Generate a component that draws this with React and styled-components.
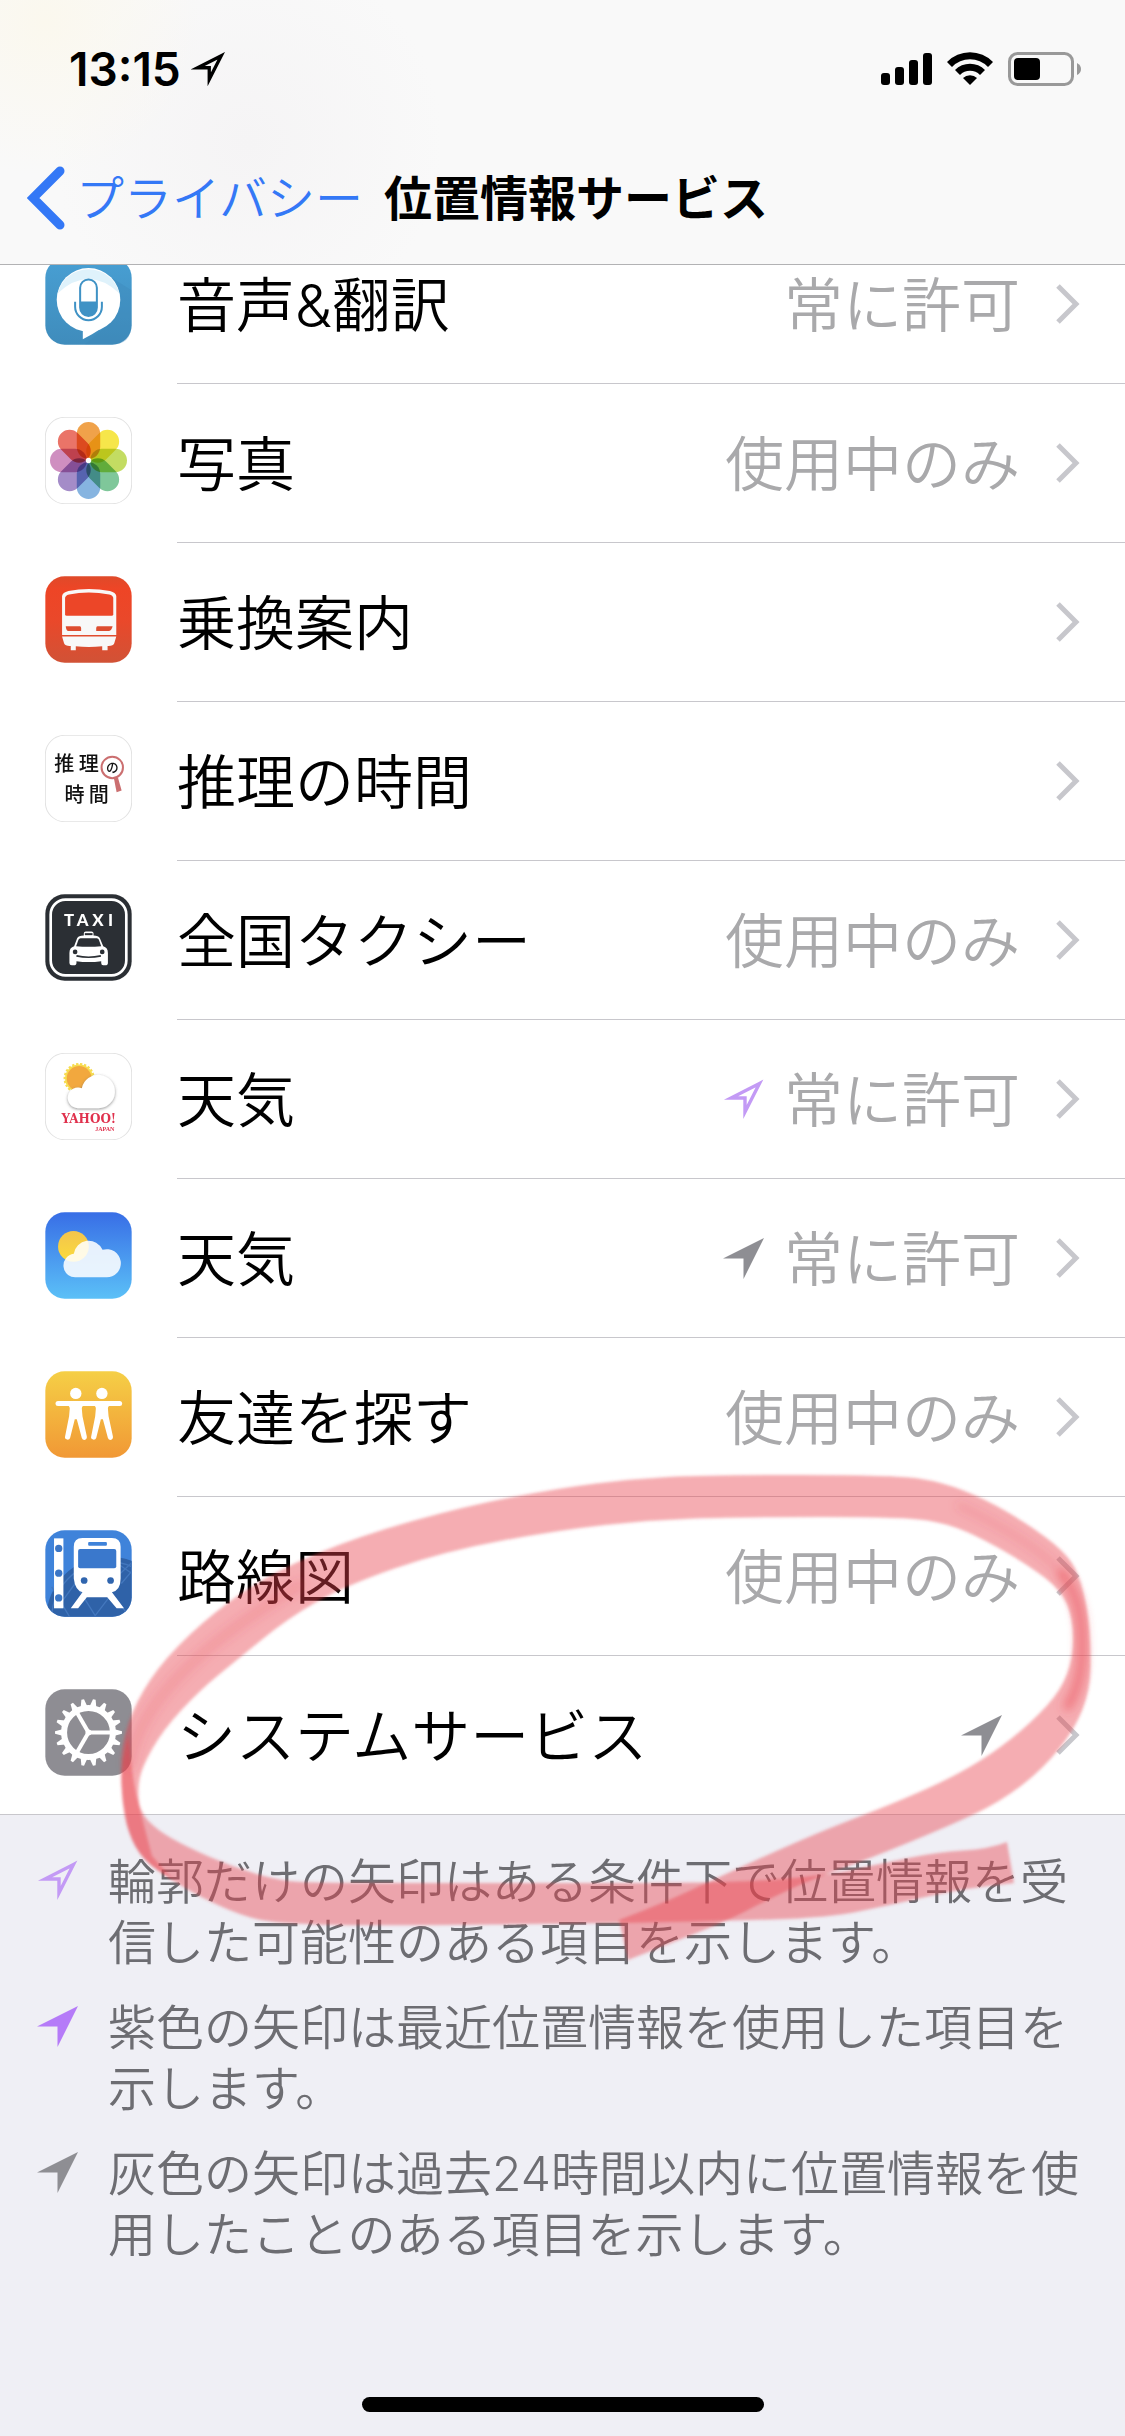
import styled, { createGlobalStyle } from "styled-components";

const GlobalStyle = createGlobalStyle`
    *{
        box-sizing: border-box;
    }
    body{
        margin: 0;
        background: #efeff5;
        font-family: Inter, "Noto Sans CJK JP", sans-serif;
    }
    ul{
        list-style: none;
        margin: 0;
        padding: 0;
    }
    a{
        color: inherit;
        text-decoration: none;
    }
    svg{
        display: block;
        flex-shrink: 0;
    }
`

const Arrow = ({size = 41, color, outline, weight = 3.4}) => (
    <svg width={size} height={size} viewBox="0 0 41 41" aria-hidden="true">
        {outline
            ? <path d="M36.5 4.5 L8 19 H22 V33 Z" fill="none" stroke={color} strokeWidth={weight} strokeMiterlimit="12" />
            : <path d="M41 0 L0 20.5 H20.5 V41 Z" fill={color} />}
    </svg>
)

const Tile = ({children, fill, border}) => (
    <svg width="87" height="87" viewBox="0 0 260 260" aria-hidden="true">
        <rect x="1" y="1" width="258" height="258" rx="58" fill={fill} stroke={border || 'none'} strokeWidth="3" />
        {children}
    </svg>
)

const VoiceIcon = () => (
    <Tile fill="url(#voiceBg)">
        <defs>
            <linearGradient id="voiceBg" x1="0" y1="0" x2="0" y2="1">
                <stop offset="0" stopColor="#489fd3" />
                <stop offset="1" stopColor="#3f8cbc" />
            </linearGradient>
        </defs>
        <path d="M200 60 L258 96 V200 Q258 258 200 258 H120 L210 180 Z" fill="#3b87b8" opacity="0.35" />
        <circle cx="130" cy="125" r="95" fill="#fff" />
        <path d="M113 205 V243 Q140 230 168 211 Z" fill="#fff" />
        <path d="M38 105 A95 95 0 0 1 222 105 Q130 20 38 105 Z" fill="#dff2fb" />
        <rect x="105" y="64" width="50" height="109" rx="25" fill="#fff" stroke="#3f92c5" strokeWidth="6" />
        <path d="M105 130 H155 V148 A25 25 0 0 1 105 148 Z" fill="#3f92c5" />
        <path d="M90 131 V146 A40 40 0 0 0 170 146 V131" fill="none" stroke="#3f92c5" strokeWidth="6" />
    </Tile>
)

const petals = ['#f0a24a', '#f6e64a', '#c3dc62', '#7fc79a', '#86b4e0', '#a48cc8', '#cf8fc0', '#ea7468']

const Petal = styled.rect`
    mix-blend-mode: multiply;
`
const Flower = styled.g`
    isolation: isolate;
`

const PhotosIcon = () => (
    <Tile fill="#fff" border="#e2e2e2">
        <Flower>
            {petals.map((color, i) => (
                <Petal
                    key={color}
                    x="95" y="15" width="70" height="110" rx="35"
                    fill={color}
                    transform={`rotate(${i * 45} 130 130)`}
                />
            ))}
        </Flower>
        <circle cx="130" cy="130" r="8" fill="#fff" />
    </Tile>
)

const TransferIcon = () => (
    <Tile fill="url(#transferBg)">
        <defs>
            <linearGradient id="transferBg" x1="0" y1="0" x2="0" y2="1">
                <stop offset="0" stopColor="#df4a2a" />
                <stop offset="0.15" stopColor="#ee4526" />
                <stop offset="0.5" stopColor="#ea482a" />
                <stop offset="1" stopColor="#d15236" />
            </linearGradient>
        </defs>
        <path d="M51 60 Q52 50 70 45 Q130 33 194 45 Q212 50 213 60 V176 H51 Z" fill="#f8f8f8" />
        <path d="M60 66 Q60 58 72 55 Q130 44 192 55 Q204 58 204 66 V114 Q204 119 199 119 H65 Q60 119 60 114 Z" fill="#ec4628" />
        <path d="M62 150 H104 Q108 150 108 156 V164 H70 Q63 164 62 150 Z M202 150 H157 Q153 150 153 156 V164 H190 Q199 164 202 150 Z" fill="#dd4d30" />
        <path d="M51 181 H213 L207 201 Q204 209 190 209 H187 V222 H171 V210 Q130 214 92 210 V222 H77 V209 H74 Q60 209 57 201 Z" fill="#f8f8f8" />
    </Tile>
)

const MysteryIcon = () => (
    <Tile fill="#fff" border="#e2e2e2">
        <g fontFamily='"Noto Sans CJK JP", sans-serif' fontWeight="500" fill="#111">
            <text x="28" y="108" fontSize="60">推</text>
            <text x="101" y="108" fontSize="60">理</text>
            <text x="58" y="201" fontSize="60">時</text>
            <text x="131" y="201" fontSize="60">間</text>
            <text x="182" y="111" fontSize="38">の</text>
        </g>
        <circle cx="201" cy="97" r="32" fill="none" stroke="#cb6f70" strokeWidth="6" />
        <path d="M206 130 L218 127 L229 166 L214 171 Z" fill="#cb6f70" />
    </Tile>
)

const TaxiIcon = () => (
    <Tile fill="#2b2f34">
        <rect x="17" y="17" width="226" height="226" rx="44" fill="none" stroke="#fff" strokeWidth="8" />
        <text x="57 95 141 188" y="95" fontFamily="Lato, sans-serif" fontWeight="900" fontSize="50" fill="#fff">TAXI</text>
        <path d="M116 124 V117 Q116 112 122 112 H139 Q145 112 145 117 V124 Q160 124 164 132 L174 156 Q188 160 188 176 V206 Q188 213 180 213 H174 Q168 213 168 206 V201 Q130 206 94 201 V206 Q94 213 86 213 H80 Q73 213 73 206 V176 Q73 160 87 156 L96 132 Q100 124 116 124 Z" fill="#fff" />
        <path d="M119 117 H142 V123 H119 Z" fill="#2b2f34" />
        <path d="M106 132 H155 Q159 132 161 137 L168 156 Q130 160 93 156 L100 137 Q102 132 106 132 Z" fill="#2b2f34" />
        <circle cx="90" cy="173" r="7" fill="#2b2f34" />
        <circle cx="171" cy="173" r="7" fill="#2b2f34" />
        <path d="M94 185 Q130 193 167 185" fill="none" stroke="#2b2f34" strokeWidth="5" />
    </Tile>
)

const YahooWeatherIcon = () => (
    <Tile fill="#fff" border="#e2e2e2">
        <defs>
            <filter id="cloudShadow" x="-20%" y="-20%" width="140%" height="150%">
                <feDropShadow dx="0" dy="3" stdDeviation="4" floodColor="#666" floodOpacity="0.7" />
            </filter>
        </defs>
        <circle cx="102" cy="76" r="42" fill="#f7dc50" />
        <circle cx="102" cy="76" r="43" fill="none" stroke="#f7dc50" strokeWidth="7" strokeDasharray="7 5" />
        <circle cx="102" cy="76" r="37" fill="#f2a83e" />
        <path
            d="M98 165 A31 31 0 1 1 110 105 A50 50 0 1 1 160 165 Z"
            fill="#fff"
            filter="url(#cloudShadow)"
        />
        <g fontWeight="700" fill="#e0314d">
            <text x="49" y="208" fontFamily='"DejaVu Serif", serif' fontSize="36">YAHOO!</text>
            <text x="150" y="232" fontFamily='"Liberation Serif", serif' fontSize="18">JAPAN</text>
        </g>
    </Tile>
)

const WeatherIcon = () => (
    <Tile fill="url(#skyBg)">
        <defs>
            <linearGradient id="skyBg" x1="0" y1="0" x2="0" y2="1">
                <stop offset="0" stopColor="#386ee6" />
                <stop offset="1" stopColor="#5bc0f7" />
            </linearGradient>
            <linearGradient id="sunBg" x1="0" y1="0" x2="0" y2="1">
                <stop offset="0" stopColor="#f3c44c" />
                <stop offset="1" stopColor="#fbdc3c" />
            </linearGradient>
        </defs>
        <circle cx="85" cy="103" r="46" fill="url(#sunBg)" />
        <path
            d="M95 195 A35 35 0 0 1 86 125 A45 45 0 0 1 172 113 A42 42 0 1 1 183 195 Z"
            fill="#fff"
            opacity="0.87"
        />
    </Tile>
)

const FriendsIcon = () => (
    <Tile fill="url(#friendsBg)">
        <defs>
            <linearGradient id="friendsBg" x1="0" y1="0" x2="0" y2="1">
                <stop offset="0" stopColor="#f5cf46" />
                <stop offset="1" stopColor="#f19835" />
            </linearGradient>
        </defs>
        <path d="M39 97 H223" stroke="#fff" strokeWidth="15" strokeLinecap="round" />
        {[92, 170].map(x => (
            <g key={x} transform={`translate(${x} 0)`} fill="#fff">
                <circle cx="0" cy="67" r="17" />
                <path d="M-28 100 H28 Q18 104 18 112 L20 135 L33 196 Q34 205 26 206 Q20 206 18 200 L3 144 H-3 L-17 200 Q-19 206 -26 205 Q-34 203 -32 196 L-20 135 L-18 112 Q-18 104 -28 100 Z" />
            </g>
        ))}
    </Tile>
)

const RailMapIcon = () => (
    <Tile fill="#3f83da">
        <defs>
            <clipPath id="railClip"><rect x="1" y="1" width="258" height="258" rx="58" /></clipPath>
        </defs>
        <g clipPath="url(#railClip)">
            <circle cx="190" cy="265" r="186" fill="#2f62a8" />
            <g fill="none" stroke="#4377bd" strokeWidth="4">
                <circle cx="190" cy="265" r="170" />
                <path d="M20 170 L75 262 M50 215 L90 160 L150 256 L200 190 L250 256 M190 82 L260 130 M225 130 L262 95 M228 160 L262 120" />
            </g>
        </g>
        <rect x="27" y="25" width="28" height="209" fill="#fff" />
        {[55, 129, 203].map(y => <circle key={y} cx="41" cy={y} r="11" fill="#3b76c6" />)}
        <path d="M86 50 Q86 24 112 24 H200 Q226 24 226 50 V145 Q226 180 200 186 L236 234 H214 L186 201 H125 L99 234 H77 L112 186 Q90 180 86 145 Z" fill="#fff" />
        <rect x="129" y="36" width="56" height="11" rx="3" fill="#3f83da" />
        <rect x="99" y="57" width="114" height="57" rx="6" fill="#3a78cc" />
        <circle cx="117" cy="151" r="10" fill="#3065ae" />
        <circle cx="196" cy="151" r="10" fill="#3065ae" />
    </Tile>
)

const teeth = Array.from({length: 18}, (_, i) => i * 20)

const GearIcon = () => (
    <Tile fill="#8e8d93">
        <circle cx="130" cy="130" r="73" fill="none" stroke="#fff" strokeWidth="18" />
        {teeth.map(deg => (
            <path key={deg} d="M208 120 L230 126 V134 L208 140 Z" fill="#fff" transform={`rotate(${deg} 130 130)`} />
        ))}
        {[0, 120, 240].map(deg => (
            <path key={deg} d="M130 130 H200" stroke="#fff" strokeWidth="12" transform={`rotate(${deg} 130 130)`} />
        ))}
        <circle cx="130" cy="130" r="9" fill="#fff" />
    </Tile>
)

const Chevron = () => (
    <svg width="24" height="40" viewBox="0 0 24 40" aria-hidden="true">
        <path d="M2 2 L20 20 L2 38" fill="none" stroke="#c7c7cc" strokeWidth="5" />
    </svg>
)

const SignalIcon = () => (
    <svg width="51" height="34" viewBox="0 0 51 34" aria-hidden="true">
        <rect x="0" y="21" width="9" height="12" rx="3" />
        <rect x="14" y="15" width="9" height="18" rx="3" />
        <rect x="28" y="8" width="9" height="25" rx="3" />
        <rect x="42" y="1" width="9" height="32" rx="3" />
    </svg>
)

const WifiIcon = () => (
    <svg width="46" height="34" viewBox="0 0 46 34" aria-hidden="true">
        <path d="M0 10 A32 32 0 0 1 46 10 L41 15 A25 25 0 0 0 5 15 Z" />
        <path d="M8 18 A21 21 0 0 1 38 18 L33 23 A14 14 0 0 0 13 23 Z" />
        <path d="M16 26 A10 10 0 0 1 30 26 L23 33 Z" />
    </svg>
)

const BatteryIcon = () => (
    <svg width="74" height="34" viewBox="0 0 74 34" aria-hidden="true">
        <rect x="1.5" y="1.5" width="63" height="31" rx="8" fill="none" stroke="#999" strokeWidth="3" />
        <rect x="6" y="6" width="26" height="22" rx="4" />
        <path d="M69 11 Q73 13 73 17 Q73 21 69 23 Z" fill="#999" />
    </svg>
)

const apps = [
    {name: '音声&翻訳', icon: VoiceIcon, status: '常に許可'},
    {name: '写真', icon: PhotosIcon, status: '使用中のみ'},
    {name: '乗換案内', icon: TransferIcon},
    {name: '推理の時間', icon: MysteryIcon},
    {name: '全国タクシー', icon: TaxiIcon, status: '使用中のみ'},
    {name: '天気', icon: YahooWeatherIcon, status: '常に許可', arrow: 'outline'},
    {name: '天気', icon: WeatherIcon, status: '常に許可', arrow: 'gray'},
    {name: '友達を探す', icon: FriendsIcon, status: '使用中のみ'},
    {name: '路線図', icon: RailMapIcon, status: '使用中のみ'},
    {name: 'システムサービス', icon: GearIcon, arrow: 'gray'},
]

const arrows = {
    outline: <Arrow color="#c39af5" outline />,
    purple: <Arrow color="#b57bf8" />,
    gray: <Arrow color="#8e8e93" />,
}

const notes = [
    {arrow: 'outline', text: '輪郭だけの矢印はある条件下で位置情報を受信した可能性のある項目を示します。'},
    {arrow: 'purple', text: '紫色の矢印は最近位置情報を使用した項目を示します。'},
    {arrow: 'gray', text: '灰色の矢印は過去24時間以内に位置情報を使用したことのある項目を示します。'},
]

// curve through the midpoints of a point list
const smooth = (pts, start) => {
    let d = `${start} ${pts[0][0]} ${pts[0][1]}`
    for (let i = 1; i < pts.length - 1; i++) {
        const [x, y] = pts[i]
        const [nx, ny] = pts[i + 1]
        d += ` Q${x} ${y} ${(x + nx) / 2} ${(y + ny) / 2}`
    }
    const last = pts[pts.length - 1]
    return d + ` L${last[0]} ${last[1]}`
}

const loopOuter = [
    [628, 1960], [679, 1940], [729, 1920], [765, 1901], [812, 1879], [866, 1860], [949, 1826], [1000, 1802],
    [1043, 1769], [1075, 1729], [1090, 1690], [1091, 1651], [1088, 1611], [1079, 1574], [1064, 1551],
    [1028, 1524], [985, 1499], [942, 1482], [895, 1475], [704, 1475], [632, 1479], [560, 1488], [466, 1506],
    [359, 1536], [273, 1572], [215, 1611], [165, 1658], [136, 1701], [121, 1745], [121, 1793], [128, 1833],
    [143, 1860], [175, 1882],
]
const loopInner = [
    [152, 1856], [143, 1822], [139, 1805], [138, 1787], [142, 1767], [163, 1730], [200, 1690], [237, 1660],
    [287, 1619], [344, 1586], [445, 1551], [560, 1530], [650, 1520], [740, 1517], [906, 1517], [949, 1524],
    [985, 1540], [1028, 1565], [1061, 1590], [1073, 1619], [1073, 1658], [1061, 1690], [1032, 1722],
    [992, 1754], [949, 1779], [892, 1804], [827, 1829], [776, 1851], [719, 1877], [668, 1901], [619, 1920],
]
const tailOuter = [
    [128, 1735], [121, 1765], [122, 1800], [128, 1833], [143, 1860], [167, 1877], [200, 1897], [240, 1915],
    [273, 1923], [360, 1926], [624, 1923], [717, 1921], [827, 1918], [895, 1904], [956, 1890], [1014, 1883],
]
const tailInner = [
    [1007, 1842], [989, 1849], [938, 1852], [884, 1863], [827, 1875], [762, 1881], [680, 1883], [560, 1883],
    [323, 1883], [280, 1881], [233, 1867], [187, 1847], [157, 1830], [140, 1812], [133, 1780], [128, 1735],
]

const RedMark = () => (
    <MarkSvg viewBox="100 1460 1010 520" aria-hidden="true">
        <defs>
            <filter id="edge"><feGaussianBlur stdDeviation="1.5" /></filter>
            <filter id="core"><feGaussianBlur stdDeviation="5" /></filter>
        </defs>
        <g fill="#e8404a" filter="url(#edge)">
            <path d={smooth(loopOuter, 'M') + smooth(loopInner, 'L') + 'Z'} fillOpacity="0.43" />
            <path d={smooth(tailOuter, 'M') + smooth(tailInner, 'L') + 'Z'} fillOpacity="0.43" />
        </g>
        <g fill="none" stroke="#e8404a" strokeLinecap="round" filter="url(#core)">
            <path d="M1062 1574 Q1083 1600 1082 1645 Q1083 1680 1068 1706" strokeWidth="10" strokeOpacity="0.45" />
            <path d="M960 1506 Q1040 1545 1064 1576" strokeWidth="8" strokeOpacity="0.16" />
            <path d="M300 1585 Q140 1680 130 1765" strokeWidth="12" strokeOpacity="0.16" />
        </g>
    </MarkSvg>
)

const App = () => {
    return (
        <Page>
            <GlobalStyle />
            <Header>
                <StatusBar>
                    <Clock>13:15<Arrow size={34} color="#000" weight={4} outline /></Clock>
                    <Indicators>
                        <SignalIcon />
                        <WifiIcon />
                        <BatteryIcon />
                    </Indicators>
                </StatusBar>
                <NavBar>
                    <BackLink href="#privacy">
                        <svg width="38" height="64" viewBox="0 0 38 64" aria-hidden="true">
                            <path d="M33 5 L6 32 L33 59" fill="none" stroke="#3478f6" strokeWidth="9" strokeLinecap="round" strokeLinejoin="miter" />
                        </svg>
                        <span>プライバシー</span>
                    </BackLink>
                    <h1>位置情報サービス</h1>
                </NavBar>
            </Header>
            <AppList>
                {apps.map(({name, icon: Icon, status, arrow}, i) => (
                    <li key={i}>
                        <AppRow href={`#app-${i}`}>
                            <IconCell><Icon /></IconCell>
                            <RowBody $last={i === apps.length - 1}>
                                <AppName>{name}</AppName>
                                <RowStatus $empty={!status}>
                                    {arrow && arrows[arrow]}
                                    {status && <StatusText>{status}</StatusText>}
                                </RowStatus>
                                <Chevron />
                            </RowBody>
                        </AppRow>
                    </li>
                ))}
            </AppList>
            <Notes>
                {notes.map(({arrow, text}) => (
                    <Note key={arrow}>
                        {arrows[arrow]}
                        <p>{text}</p>
                    </Note>
                ))}
            </Notes>
            <HomeBar />
            <RedMark />
        </Page>
    );
}

const Page = styled.div`
    position: relative;
    display: flex;
    flex-direction: column;
    min-height: 100vh;
`
const Header = styled.header`
    position: sticky;
    top: 0;
    z-index: 1;
    border-bottom: 1px solid #b2b2b4;
    background:
        radial-gradient(circle at 4% 8%, #fbf8ee, rgba(251,248,238,0) 14%),
        radial-gradient(circle at 22% 54%, #f5f4f5, rgba(245,244,245,0) 22%),
        #f9f9f9;
`
const StatusBar = styled.div`
    display: flex;
    align-items: center;
    justify-content: space-between;
    height: 132px;
    padding: 6px 43px 0 69px;
`
const Clock = styled.div`
    display: flex;
    align-items: center;
    gap: 10px;
    font-size: 46px;
    font-weight: 600;
`
const Indicators = styled.div`
    display: flex;
    align-items: center;
    gap: 15px;
`
const NavBar = styled.nav`
    display: flex;
    align-items: center;
    gap: 21px;
    height: 132px;
    padding: 0 27px;
    h1{
        margin: 0;
        padding-bottom: 6px;
        font-size: 48px;
        font-weight: 700;
        white-space: nowrap;
    }
`
const BackLink = styled.a`
    display: flex;
    align-items: center;
    gap: 11px;
    font-size: 48px;
    font-weight: 350;
    color: #3478f6;
    white-space: nowrap;
    span{
        padding-bottom: 6px;
    }
`
const AppList = styled.ul`
    margin-top: -40px;
    background: #fff;
    border-bottom: 1px solid #c8c7cc;
`
const AppRow = styled.a`
    display: flex;
`
const IconCell = styled.div`
    display: flex;
    align-items: center;
    width: 177px;
    padding: 0 0 6px 45px;
`
const RowBody = styled.div`
    flex: 1;
    display: flex;
    align-items: center;
    height: ${ props => props.$last ? '158px' : '159px' };
    padding-right: 45px;
    border-bottom: ${ props => props.$last ? 'none' : '1px solid #c8c7cc' };
`
const RowText = styled.span`
    padding-bottom: 6px;
    font-size: 59px;
    font-weight: 350;
`
const AppName = styled(RowText)`
    flex: 1;
    color: #000;
`
const StatusText = styled(RowText)`
    color: #a9a9ab;
`
const RowStatus = styled.span`
    display: flex;
    align-items: center;
    gap: 20px;
    margin-right: ${ props => props.$empty ? '54px' : '36px' };
`
const Notes = styled.ul`
    display: flex;
    flex-direction: column;
    gap: 24px;
    padding: 36px 40px 0 37px;
`
const Note = styled.li`
    display: flex;
    align-items: flex-start;
    gap: 30px;
    svg{
        margin-top: 9px;
    }
    p{
        flex: 1;
        margin: 0;
        font-size: 48px;
        font-weight: 350;
        line-height: 61px;
        color: #6d6d72;
    }
`
const HomeBar = styled.div`
    width: 402px;
    height: 15px;
    margin: auto auto 24px;
    border-radius: 8px;
    background: #000;
`
const MarkSvg = styled.svg`
    position: absolute;
    top: 1460px;
    left: 100px;
    width: 1010px;
    height: 520px;
    pointer-events: none;
`

export default App;
